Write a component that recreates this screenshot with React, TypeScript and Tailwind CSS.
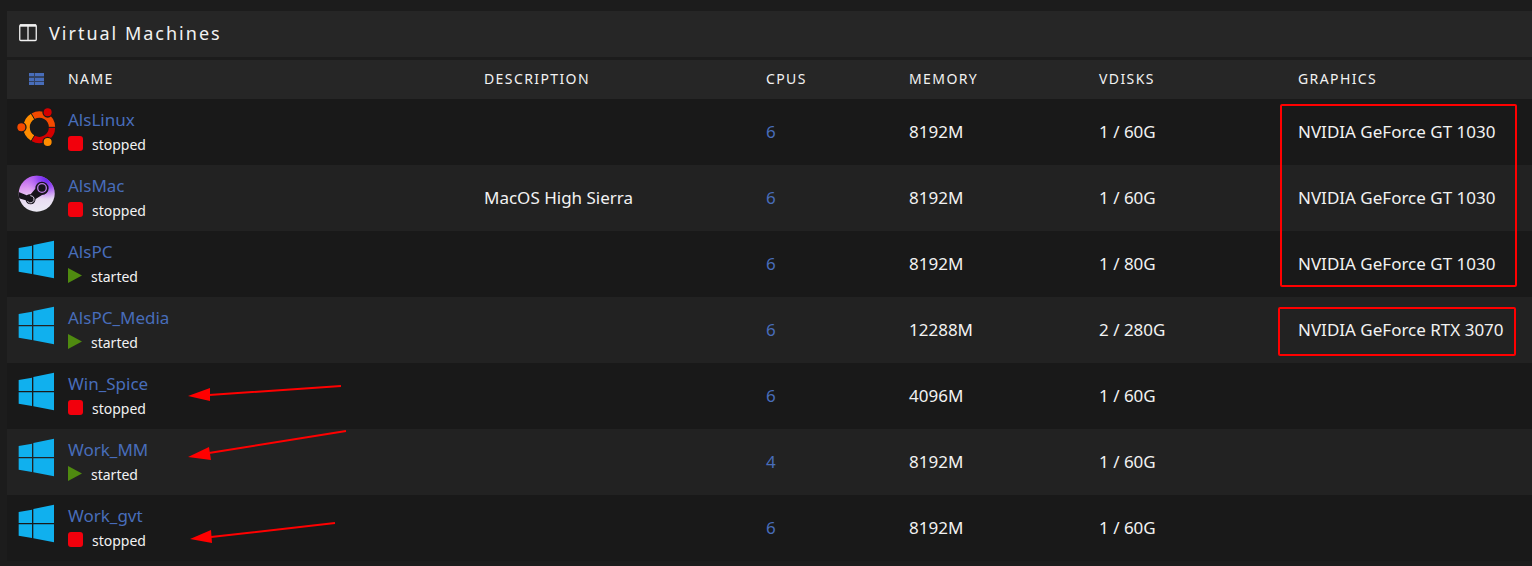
import React from 'react';

type OsIcon = 'ubuntu' | 'steam' | 'windows';

interface IVirtualMachine {
    name: string;
    icon: OsIcon;
    status: 'stopped' | 'started';
    description?: string;
    cpus: number;
    memory: string;
    vdisks: string;
    graphics?: string;
}

const machines: Array<IVirtualMachine> = [
    { name: 'AlsLinux', icon: 'ubuntu', status: 'stopped', cpus: 6, memory: '8192M', vdisks: '1 / 60G', graphics: 'NVIDIA GeForce GT 1030' },
    { name: 'AlsMac', icon: 'steam', status: 'stopped', description: 'MacOS High Sierra', cpus: 6, memory: '8192M', vdisks: '1 / 60G', graphics: 'NVIDIA GeForce GT 1030' },
    { name: 'AlsPC', icon: 'windows', status: 'started', cpus: 6, memory: '8192M', vdisks: '1 / 80G', graphics: 'NVIDIA GeForce GT 1030' },
    { name: 'AlsPC_Media', icon: 'windows', status: 'started', cpus: 6, memory: '12288M', vdisks: '2 / 280G', graphics: 'NVIDIA GeForce RTX 3070' },
    { name: 'Win_Spice', icon: 'windows', status: 'stopped', cpus: 6, memory: '4096M', vdisks: '1 / 60G' },
    { name: 'Work_MM', icon: 'windows', status: 'started', cpus: 4, memory: '8192M', vdisks: '1 / 60G' },
    { name: 'Work_gvt', icon: 'windows', status: 'stopped', cpus: 6, memory: '8192M', vdisks: '1 / 60G' },
];

function UbuntuIcon() {
    return (
        <svg viewBox="51 27 120 120" className="block size-10" aria-hidden="true">
            <g fill="none" strokeWidth="19">
                <path d="M99 55A38 38 0 0 1 156 88" stroke="#f44a00" />
                <path d="M156 88A38 38 0 0 1 99 121" stroke="#d40000" />
                <path d="M99 121A38 38 0 0 1 99 55" stroke="#ff8c00" />
            </g>
            <path d="M143 88H168M105 110L92 132M105 66L92 44" stroke="#191919" strokeWidth="3" />
            <g stroke="#191919" strokeWidth="4">
                <circle cx="143" cy="43" r="14" fill="#d40000" />
                <circle cx="64" cy="88" r="14" fill="#f44a00" />
                <circle cx="143" cy="132" r="14" fill="#ff8c00" />
            </g>
        </svg>
    );
}

function SteamIcon() {
    return (
        <svg viewBox="51 225 120 120" className="block size-10" aria-hidden="true">
            <defs>
                <linearGradient id="steam-base" x1="0.4" y1="0" x2="0.5" y2="1">
                    <stop offset="0" stopColor="#b04cf0" />
                    <stop offset="0.35" stopColor="#dc98f2" />
                    <stop offset="0.65" stopColor="#e8dcf2" />
                    <stop offset="1" stopColor="#ececf4" />
                </linearGradient>
                <radialGradient id="steam-glow" cx="0.78" cy="0.12" r="0.55">
                    <stop offset="0" stopColor="#5c20f0" />
                    <stop offset="0.45" stopColor="#8a3cf4" stopOpacity="0.75" />
                    <stop offset="1" stopColor="#c080f4" stopOpacity="0" />
                </radialGradient>
                <clipPath id="steam-clip">
                    <circle cx="110" cy="287" r="54" />
                </clipPath>
            </defs>
            <g clipPath="url(#steam-clip)">
                <rect x="50" y="226" width="120" height="120" fill="url(#steam-base)" />
                <rect x="50" y="226" width="120" height="120" fill="url(#steam-glow)" />
                <path d="M50 280L80 292Q86 288 92 289L106 272A20 20 0 1 1 126 291L107 303Q105 319 92 319Q80 319 77 307L50 299Z" fill="#17141c" />
                <circle cx="126" cy="270" r="13" fill="none" stroke="#b77ae0" strokeWidth="4" />
                <path d="M82 310Q88 317 96 314Q104 309 102 300Q99 293 91 293" fill="none" stroke="#d8d0e0" strokeWidth="3" />
            </g>
        </svg>
    );
}

function WindowsIcon() {
    return (
        <svg viewBox="51 27 120 120" className="block size-10" aria-hidden="true" fill="#10b0ee">
            <path d="M56 54L96 47V87H56ZM100 45L162 32V87H100ZM56 91H96V132L56 125ZM100 91H162V145L100 133Z" />
        </svg>
    );
}

const icons = { ubuntu: UbuntuIcon, steam: SteamIcon, windows: WindowsIcon };

function Status({ status }: { status: IVirtualMachine['status'] }) {
    return (
        <span className="flex items-center gap-[9px] text-sm leading-6">
            {status === 'stopped' ? (
                <span className="mb-[3px] size-[15px] rounded-[3px] bg-[#f2000c]" />
            ) : (
                <svg viewBox="0 0 14 15" className="mb-[3px] h-[15px] w-[14px] text-[#4f8a10]" fill="currentColor" aria-hidden="true">
                    <path d="M0 0L14 7.5L0 15Z" />
                </svg>
            )}
            {status}
        </span>
    );
}

function MachineRow({ machine }: { machine: IVirtualMachine }) {
    const Icon = icons[machine.icon];
    return (
        <tr className="h-[66px] odd:bg-[#191919] even:bg-[#222222]">
            <td className="pt-2 pl-[10px] align-top">
                <Icon />
            </td>
            <td className="pt-2 align-top">
                <a href="#" className="block leading-[26px] text-[#486dba]">
                    {machine.name}
                </a>
                <Status status={machine.status} />
            </td>
            <td>{machine.description}</td>
            <td>
                <a href="#" className="text-[#486dba]">
                    {machine.cpus}
                </a>
            </td>
            <td>{machine.memory}</td>
            <td>{machine.vdisks}</td>
            <td className="whitespace-nowrap">{machine.graphics}</td>
        </tr>
    );
}

function Annotations() {
    return (
        <div className="pointer-events-none absolute inset-0">
            <div className="absolute top-[104px] right-[15px] h-[183px] w-[237px] rounded-xs border-2 border-[#ff0000]" />
            <div className="absolute top-[307px] right-4 h-[49px] w-[238px] rounded-xs border-2 border-[#ff0000]" />
            <svg viewBox="180 370 180 190" className="absolute top-[370px] left-[180px] h-[190px] w-[180px]" fill="#ff0000" stroke="#ff0000" aria-hidden="true">
                <path d="M209 395L341 386M209 453L346 431M211 537L335 523" strokeWidth="2" />
                <path d="M188 396L210 388V401ZM188 457L209 447L211 460ZM190 539L211 530L212 543Z" stroke="none" />
            </svg>
        </div>
    );
}

function App() {
    return (
        <main className="relative min-h-screen overflow-hidden bg-[#1c1c1c] pt-[11px] pb-[5px] pl-[7px] font-['Noto_Sans',sans-serif] text-[17px] leading-6 text-[#f2f2f2]">
            <h1 className="mb-[3px] flex h-[46px] items-center gap-3 bg-[#262626] pb-[3px] pl-3 text-lg tracking-[2px]">
                <svg viewBox="0 0 18 18" className="size-[18px]" fill="none" stroke="currentColor" aria-hidden="true">
                    <rect x="0.75" y="1" width="16.5" height="15.5" rx="1" strokeWidth="1.3" />
                    <path d="M1 1.5H17" strokeWidth="2.4" />
                    <path d="M9 2V16" strokeWidth="1.3" />
                </svg>
                Virtual Machines
            </h1>
            <table className="w-full table-fixed text-left">
                <colgroup>
                    <col className="w-[61px]" />
                    <col className="w-[416px]" />
                    <col />
                    <col className="w-[143px]" />
                    <col className="w-[190px]" />
                    <col className="w-[199px]" />
                    <col className="w-[234px]" />
                </colgroup>
                <thead>
                    <tr className="h-[39px] bg-[#262626] text-sm tracking-widest uppercase [&>th]:pb-[2px] [&>th]:font-normal">
                        <th className="pl-[22px]">
                            <button type="button" aria-label="Toggle list" className="block text-[#486dba]">
                                <svg viewBox="0 0 15 12" className="h-3 w-[15px]" fill="currentColor" aria-hidden="true">
                                    <rect width="15" height="12" rx="1" opacity="0.4" />
                                    <path d="M0 0H5V3H0ZM6 0H15V3H6ZM0 5H5V8H0ZM6 5H15V8H6ZM0 9H5V12H0ZM6 9H15V12H6Z" />
                                </svg>
                            </button>
                        </th>
                        <th>Name</th>
                        <th>Description</th>
                        <th>CPUs</th>
                        <th>Memory</th>
                        <th>vDisks</th>
                        <th>Graphics</th>
                    </tr>
                </thead>
                <tbody>
                    {machines.map((machine) => (
                        <MachineRow key={machine.name} machine={machine} />
                    ))}
                </tbody>
            </table>
            <Annotations />
        </main>
    );
}

export default App;
